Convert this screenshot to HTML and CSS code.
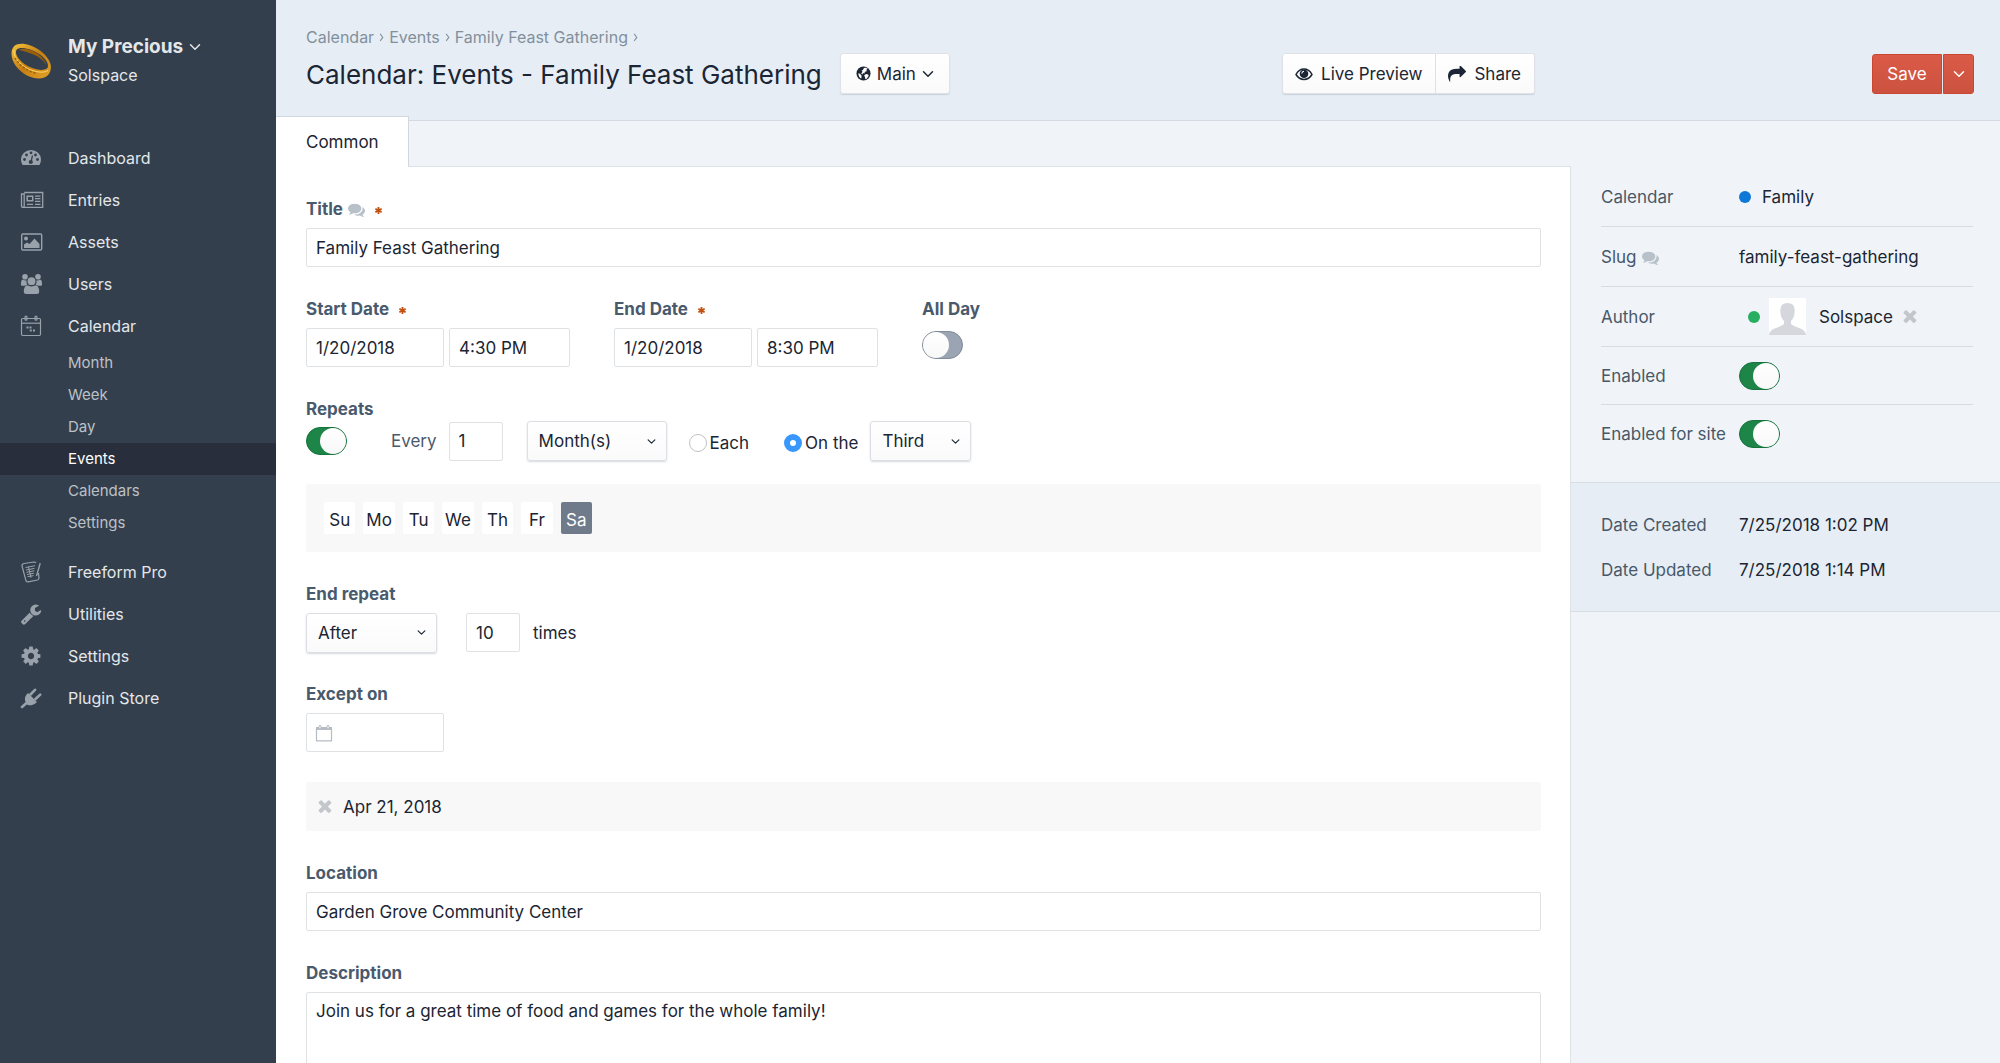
FILE: index.html
```html
<!DOCTYPE html>
<html lang="en">
<head>
<meta charset="utf-8">
<title>Calendar: Events - Family Feast Gathering</title>
<meta name="viewport" content="width=device-width, initial-scale=1">
<link rel="stylesheet" href="styles.css">
</head>
<body>
<svg class="sprite" aria-hidden="true">
  <symbol id="i-chevron" viewBox="0 0 12 12"><path d="M1.500 3.800 6 8.200l4.500-4.400" fill="none" stroke="currentColor" stroke-width="1.500" stroke-linecap="round" stroke-linejoin="round"/></symbol>
  <symbol id="i-sep" viewBox="0 0 8 12"><path d="M2.500 2.500 5.500 6.500 2.500 10.500" fill="none" stroke="currentColor" stroke-width="1.200"/></symbol>
  <symbol id="i-star" viewBox="0 0 10 10"><path d="M5 1v8M1.500 3l7 4M8.500 3l-7 4" stroke="currentColor" stroke-width="2"/></symbol>
  <symbol id="i-times" viewBox="250 350 1300 1300"><path fill="currentColor" d="M1490 1322q0 40-28 68l-136 136q-28 28-68 28t-68-28l-294-294-294 294q-28 28-68 28t-68-28l-136-136q-28-28-28-68t28-68l294-294-294-294q-28-28-28-68t28-68l136-136q28-28 68-28t68 28l294 294 294-294q28-28 68-28t68 28l136 136q28 28 28 68t-28 68l-294 294 294 294q28 28 28 68z"/></symbol>
  <symbol id="i-comments" viewBox="0 192 1792 1472"><path fill="currentColor" d="M1408 768q0 139-94 257t-256.500 186.500-353.500 68.500q-86 0-176-16-124 88-278 128-36 9-86 16h-3q-11 0-20.500-8t-11.500-21q-1-3-1-6.500t.5-6.500 2-6l2.500-5 3.500-5.500 4-5 4.500-5 4-4.500q5-6 23-25t26-29.500 22.500-29 25-38.500 20.500-44q-124-72-195-177t-71-224q0-139 94-257t256.500-186.500 353.500-68.500 353.500 68.500 256.500 186.500 94 257zm384 256q0 120-71 224.500t-195 176.500q10 24 20.500 44t25 38.500 22.500 29 26 29.500 23 25q1 1 4 4.500t4.500 5 4 5 3.500 5.500l2.500 5 2 6 .5 6.500-1 6.500q-3 14-13 22t-22 7q-50-7-86-16-154-40-278-128-90 16-176 16-271 0-472-132 58 4 88 4 161 0 309-45t264-129q125-92 192-212t67-254q0-77-23-152 129 71 204 178t75 230z"/></symbol>
</svg>

<div class="app">
  <aside class="sidebar">
    <div class="brand">
      <svg class="ring" viewBox="0 0 40 36" aria-hidden="true">
        <defs><linearGradient id="gold" x1="0" y1="0" x2="1" y2="1"><stop offset="0" stop-color="#f6c33c"/><stop offset=".5" stop-color="#c47d12"/><stop offset="1" stop-color="#e2a32a"/></linearGradient></defs>
        <path fill="url(#gold)" fill-rule="evenodd" d="M2.500 4C5 .5 12-.3 19.500 2.500 29 6 37 13 39.500 21c1 4 0 8-2 10.500-4 5-13 5-21.500 1C7 28 .5 19 .5 10.500.5 8 1 6 2.500 4zM5.500 7c-2 3.500 1.500 9.500 8 14 8 5.500 18 7.500 22.500 4.500 3-3.500-1-10-8-14.500C20 5.500 8.500 3 5.500 7z"/>
        <path fill="#9a5f0a" d="M8 7c3-2 10-1.500 16 2 5 2.800 10 8 11.500 13-3-5-8-8.500-13-10.500C17 9 12 8 8 7z"/>
        <path fill="none" stroke="#ffdb6b" stroke-width="1" d="M3 7c-1 9 9 17 17 20 8 3 14 2.500 17 .5"/>
        <path fill="none" stroke="#9a5f0a" stroke-width="1.500" stroke-dasharray="2 2" d="M4 15c5 8 13 13.500 22 15.500"/>
      </svg>
      <div class="brand-text">
        <button class="site-name" type="button">My Precious <svg class="chev"><use href="#i-chevron"/></svg></button>
        <a class="site-owner" href="#">Solspace</a>
      </div>
    </div>
    <nav class="nav" aria-label="Main">
      <a class="nav-item" href="#"><svg viewBox="0 0 22 22"><path fill="currentColor" d="M1 12.500a10 9.500 0 0 1 20 0q0 3.200-1.500 5.500h-17Q1 15.700 1 12.500z"/><g fill="#333f4d"><circle cx="4.500" cy="12.500" r="1.400"/><circle cx="6.500" cy="8" r="1.400"/><circle cx="11" cy="5.800" r="1.400"/><circle cx="15.500" cy="8" r="1.400"/><circle cx="17.500" cy="12.500" r="1.400"/><circle cx="10.800" cy="15" r="2.100"/></g><path stroke="#333f4d" stroke-width="1.200" d="m11 15 1.500-6.500"/></svg>Dashboard</a>
      <a class="nav-item" href="#"><svg class="wide" viewBox="0 0 24 22"><g fill="none" stroke="currentColor" stroke-width="1.300"><path d="M4.200 3.500h18.500v14.800H3q-1.500 0-1.500-1.500V5h2.700v12q0 1.200-1.200 1.300"/><path d="M7.200 7.200h5.500v4.600H7.200z" stroke-width="1.500"/><path d="M15 7.200h5.500M15 9.700h5.500M15 12.300h5.500M7 15.300h6M15 15.300h5.500"/></g></svg>Entries</a>
      <a class="nav-item" href="#"><svg class="wide" viewBox="0 0 24 22"><rect x="1.700" y="3" width="20" height="16" rx="1.200" fill="none" stroke="currentColor" stroke-width="1.400"/><circle cx="6" cy="7.500" r="2" fill="currentColor"/><path fill="currentColor" d="M4 17v-3.500l3-2 2.500 1.500 5-5.500 5 5.500v4z"/></svg>Assets</a>
      <a class="nav-item" href="#"><svg class="wide" viewBox="0 0 24 22"><g fill="currentColor"><circle cx="5" cy="3.800" r="2.800"/><circle cx="18" cy="3.800" r="2.800"/><path d="M1 12V9.500Q1 7 3 6.500q2 1.300 3.500.8-.5 3.200 1 4.500-1.500.2-2.500 1H2Q1 12.800 1 12zM22 12V9.500Q22 7 20 6.500q-2 1.300-3.500.8.500 3.200-1 4.500 1.500.2 2.500 1h3q1 0 1-.8z"/><circle cx="11.500" cy="8.200" r="3.900"/><path d="M7 12.300q4.500 2.200 9 0 3.200 1.200 3.200 6.200 0 2.500-2.500 2.500H6.300q-2.500 0-2.500-2.500 0-5 3.200-6.200z"/></g></svg>Users</a>
      <a class="nav-item" href="#"><svg viewBox="0 0 22 22"><g fill="none" stroke="currentColor" stroke-width="1.200"><rect x="1.500" y="3.500" width="19" height="17" rx="1.200"/><path d="M1.500 8.200h19"/><rect x="5" y="1.200" width="2" height="4" rx="1"/><rect x="15" y="1.200" width="2" height="4" rx="1"/></g><path fill="currentColor" d="M6.500 11.500h2v2h-2zM9.500 11.500h2v2h-2zM9.800 14.600h2v2h-2zM13 14.600h2v2h-2z"/></svg>Calendar</a>
      <div class="subnav">
        <a href="#">Month</a>
        <a href="#">Week</a>
        <a href="#">Day</a>
        <a href="#" class="active" aria-current="page">Events</a>
        <a href="#">Calendars</a>
        <a href="#">Settings</a>
      </div>
      <a class="nav-item" href="#"><svg viewBox="0 0 22 22"><g fill="none" stroke="currentColor"><path stroke-width="1.200" d="M4 2.500 14 1q1.500 0 1.800 1M18.500 12l.5 5q0 1.500-1.500 2l-9.500 1.800q-1.500.2-2-1L2 5q-.3-2 2-2.500"/><path stroke-width="1.400" d="M20.200 2.200 16.500 15"/><path d="m5.500 6.500 9.500-1.800M6 9l8.500-1.600M6.500 11.300l7.800-1.500M7 13.500l7-1.300M7.500 15.700l6-1.100M8.500 5.800l2.500 11"/></g></svg>Freeform Pro</a>
      <a class="nav-item" href="#"><svg viewBox="0 0 1792 1792"><path fill="currentColor" d="M448 1472q0-26-19-45t-45-19-45 19-19 45 19 45 45 19 45-19 19-45zm644-420l-682 682q-37 37-90 37-52 0-91-37l-106-108q-38-36-38-90 0-53 38-91l681-681q39 98 114.500 173.500t173.500 114.500zm634-435q0 39-23 106-47 134-164.500 217.500t-258.500 83.500q-185 0-316.500-131.500t-131.500-316.500 131.500-316.500 316.500-131.500q58 0 121.500 16.500t107.500 46.500q16 11 16 28t-16 28l-293 169v224l193 107q5-3 79-48.500t135.500-81 70.500-35.500q15 0 23.500 10t8.500 25z"/></svg>Utilities</a>
      <a class="nav-item" href="#"><svg viewBox="0 0 1792 1792"><path fill="currentColor" d="M1152 896q0-106-75-181t-181-75-181 75-75 181 75 181 181 75 181-75 75-181zm512-109v222q0 12-8 23t-20 13l-185 28q-19 54-39 91 35 50 107 138 10 12 10 25t-9 23q-27 37-99 108t-94 71q-12 0-26-9l-138-108q-44 23-91 38-16 136-29 186-7 28-36 28h-222q-14 0-24.500-8.500t-11.500-21.500l-28-184q-49-16-90-37l-141 107q-10 9-25 9-14 0-25-11-126-114-165-168-7-10-7-23 0-12 8-23 15-21 51-66.500t54-70.500q-27-50-41-99l-183-27q-13-2-21-12.500t-8-23.500v-222q0-12 8-23t19-13l186-28q14-46 39-92-40-57-107-138-10-12-10-24 0-10 9-23 26-36 98.500-107.500t94.500-71.500q13 0 26 10l138 107q44-23 91-38 16-136 29-186 7-28 36-28h222q14 0 24.500 8.500t11.500 21.500l28 184q49 16 90 37l142-107q9-9 24-9 13 0 25 10 129 119 165 170 7 8 7 22 0 12-8 23-15 21-51 66.500t-54 70.500q26 50 41 98l183 28q13 2 21 12.500t8 23.500z"/></svg>Settings</a>
      <a class="nav-item" href="#"><svg viewBox="0 0 22 22"><path fill="currentColor" d="m8 6 9 9q-2.500 2.800-5.500 3.200-2.500.4-4.500-.8L6 16.200Q4.300 13.500 5 10.500 5.600 8 8 6z"/><path stroke="currentColor" stroke-width="2.600" stroke-linecap="round" d="m2 20 4.500-4M10.500 7.500 15 2.800M15.500 12l4.700-4.400"/></svg>Plugin Store</a>
    </nav>
  </aside>

  <main class="main">
    <header class="header">
      <div class="header-main">
        <nav class="crumbs" aria-label="Breadcrumb">
          <a href="#">Calendar</a><svg><use href="#i-sep"/></svg>
          <a href="#">Events</a><svg><use href="#i-sep"/></svg>
          <a href="#">Family Feast Gathering</a><svg><use href="#i-sep"/></svg>
        </nav>
        <div class="title-row">
          <h1>Calendar: Events - Family Feast Gathering</h1>
          <button class="btn" type="button"><svg class="globe" viewBox="0 0 16 16"><circle cx="8" cy="8" r="7.500" fill="currentColor"/><path fill="#fdfdfd" d="M8.500 2q2.500-.5 4 1l-1.500 1 .5 1.500-2 .5-.5 2-1.500-.5-.5 1.500L5.500 8 7 6 6 5l1.500-1zM10.500 8.500l2.500.5.500 1.500-2 3-1.500.5-.5-2.500-1-1zM3 7.500 5.500 9.500 6 11l-.5 2.500Q3 12 2.500 9z"/></svg>Main<svg class="chev"><use href="#i-chevron"/></svg></button>
          <div class="btn-group">
            <button class="btn" type="button"><svg class="eye" viewBox="0 0 18 14"><path fill="none" stroke="currentColor" stroke-width="1.500" d="M1 7.500Q4 2 9 2t8 5.500Q14 12.500 9 12.500T1 7.500z"/><circle cx="9" cy="6.800" r="4.300" fill="currentColor"/><path d="M6.800 6.500Q7 4.500 9 4.300" fill="none" stroke="#fff" stroke-width="1.100"/></svg>Live Preview</button>
            <button class="btn" type="button"><svg class="share" viewBox="0 128 1792 1536"><path fill="currentColor" d="M1792 640q0 26-19 45l-512 512q-19 19-45 19t-45-19-19-45v-256h-224q-98 0-175.500 6t-154 21.500-133 42.500-105.500 69.500-80 101-48.500 138.500-17.500 181q0 55 5 123 0 6 2.500 23.500t2.500 26.500q0 15-8.500 25t-23.500 10q-16 0-28-17-7-9-13-22t-13.500-30-10.500-24q-127-285-127-451 0-199 53-333 162-403 875-403h224v-256q0-26 19-45t45-19 45 19l512 512q19 19 19 45z"/></svg>Share</button>
          </div>
        </div>
      </div>
      <div class="header-side">
        <div class="save-group">
          <button class="save" type="submit" form="event-form">Save</button>
          <button class="save save-menu" type="button" aria-label="More save options"><svg class="chev"><use href="#i-chevron"/></svg></button>
        </div>
      </div>
    </header>

    <div class="body">
      <div class="content">
        <nav class="tabs"><a class="tab" href="#">Common</a></nav>
        <form class="pane" id="event-form">
          <div class="field">
            <label class="heading" for="title">Title <svg class="tip"><use href="#i-comments"/></svg><svg class="req"><use href="#i-star"/></svg></label>
            <input class="text" id="title" type="text" value="Family Feast Gathering">
          </div>

          <div class="dates">
            <div class="field">
              <label class="heading" for="start-date">Start Date <svg class="req"><use href="#i-star"/></svg></label>
              <div class="pair">
                <input class="text date" id="start-date" type="text" value="1/20/2018">
                <input class="text time" type="text" value="4:30 PM" aria-label="Start time">
              </div>
            </div>
            <div class="field">
              <label class="heading" for="end-date">End Date <svg class="req"><use href="#i-star"/></svg></label>
              <div class="pair">
                <input class="text date" id="end-date" type="text" value="1/20/2018">
                <input class="text time" type="text" value="8:30 PM" aria-label="End time">
              </div>
            </div>
            <div class="field">
              <label class="heading" for="all-day">All Day</label>
              <div class="toggle-row"><input class="toggle" id="all-day" type="checkbox"></div>
            </div>
          </div>

          <div class="field">
            <label class="heading" for="repeats">Repeats</label>
            <div class="repeat-row">
              <input class="toggle" id="repeats" type="checkbox" checked>
              <label class="every" for="interval">Every</label>
              <input class="text num" id="interval" type="text" value="1">
              <span class="select select-freq"><select aria-label="Frequency"><option>Month(s)</option></select><svg class="chev"><use href="#i-chevron"/></svg></span>
              <label class="radio radio-each"><input type="radio" name="by">Each</label>
              <label class="radio"><input type="radio" name="by" checked>On the</label>
              <span class="select select-nth"><select aria-label="Occurrence"><option>Third</option></select><svg class="chev"><use href="#i-chevron"/></svg></span>
            </div>
            <div class="well">
              <div class="days">
                <button type="button">Su</button><button type="button">Mo</button><button type="button">Tu</button><button type="button">We</button><button type="button">Th</button><button type="button">Fr</button><button type="button" class="on" aria-pressed="true">Sa</button>
              </div>
            </div>
          </div>

          <div class="field">
            <label class="heading" for="end-repeat">End repeat</label>
            <div class="end-row">
              <span class="select select-end"><select id="end-repeat"><option>After</option></select><svg class="chev"><use href="#i-chevron"/></svg></span>
              <input class="text num" id="times" type="text" value="10">
              <label for="times">times</label>
            </div>
          </div>

          <div class="field">
            <label class="heading" for="except">Except on</label>
            <div class="except">
              <input class="text date" id="except" type="text">
              <svg class="cal" viewBox="0 0 18 18" aria-hidden="true"><path fill="none" stroke="currentColor" stroke-width="1.200" d="M1.500 4.500h15v12.300h-15z"/><path fill="currentColor" d="M1 3h16v3H1z"/><path fill="#fff" stroke="currentColor" d="M4 4.500V2q1-1.500 2 0v2.500q-1 1-2 0zM12 4.500V2q1-1.500 2 0v2.500q-1 1-2 0z"/></svg>
            </div>
            <ul class="exceptions">
              <li><button class="remove" type="button" aria-label="Remove Apr 21, 2018"><svg><use href="#i-times"/></svg></button>Apr 21, 2018</li>
            </ul>
          </div>

          <div class="field">
            <label class="heading" for="location">Location</label>
            <input class="text" id="location" type="text" value="Garden Grove Community Center">
          </div>

          <div class="field">
            <label class="heading" for="description">Description</label>
            <textarea class="text" id="description">Join us for a great time of food and games for the whole family!</textarea>
          </div>
        </form>
      </div>

      <aside class="details">
        <div class="settings">
          <div class="row"><span class="name">Calendar</span><span class="value"><i class="dot blue"></i>Family</span></div>
          <div class="row"><label class="name" for="slug">Slug <svg class="tip"><use href="#i-comments"/></svg></label><input class="slug" id="slug" type="text" value="family-feast-gathering"></div>
          <div class="row"><span class="name">Author</span><span class="value author"><i class="dot green"></i><svg class="avatar" viewBox="0 0 37 37"><path fill="#fff" d="M0 0h37v37H0z"/><path fill="#d5d7dd" d="M18.500 5q7.500 0 7.200 8-.2 7-3.700 10v3q3 2.500 8 4 6 1.500 7 7H0q1-5.500 7-7 5-1.500 8-4v-3q-3.500-3-3.700-10-.3-8 7.200-8z"/></svg><span>Solspace</span><button class="remove" type="button" aria-label="Remove Solspace"><svg><use href="#i-times"/></svg></button></span></div>
          <div class="row row-toggle"><label class="name" for="enabled">Enabled</label><input class="toggle" id="enabled" type="checkbox" checked></div>
          <div class="row row-toggle"><label class="name" for="enabled-site">Enabled for site</label><input class="toggle" id="enabled-site" type="checkbox" checked></div>
        </div>
        <dl class="meta">
          <div class="meta-row"><dt>Date Created</dt><dd>7/25/2018 1:02 PM</dd></div>
          <div class="meta-row"><dt>Date Updated</dt><dd>7/25/2018 1:14 PM</dd></div>
        </dl>
      </aside>
    </div>
  </main>
</div>
</body>
</html>
```
FILE: styles.css
```css
* { box-sizing: border-box; }

body {
  margin: 0;
  font: 17px/22px Inter, "Liberation Sans", sans-serif;
  color: #1b2533;
  background: #f0f4f8;
}

button, input, select, textarea { font: inherit; color: inherit; margin: 0; }
button { padding: 0; border: 0; background: none; cursor: pointer; }
a { color: inherit; text-decoration: none; }
svg { flex: none; display: block; }
.sprite { display: none; }
.chev { width: 12px; height: 12px; }

.app {
  display: grid;
  grid-template-columns: 276px minmax(0, 1fr);
  height: 100vh;
  overflow: hidden;
}

/* Sidebar */
.sidebar { background: #333f4d; color: #e4e7ea; font-size: 16px; }
.brand { display: flex; gap: 17px; padding: 34px 11px 51px; }
.ring { width: 40px; height: 36px; margin-top: 9px; }
.brand-text { display: flex; flex-direction: column; gap: 4px; }
.site-name { display: flex; align-items: center; gap: 6px; height: 26px; font-size: 19px; font-weight: 700; }
.site-owner { height: 22px; }
.nav-item { display: flex; align-items: center; height: 42px; padding-left: 20px; gap: 26px; }
.nav-item svg { width: 22px; height: 22px; color: #99a1aa; }
.nav-item svg.wide { width: 24px; margin-right: -2px; }
.subnav { margin-bottom: 12px; font-size: 15px; color: #bcc1c7; }
.subnav a { display: flex; align-items: center; height: 32px; padding-left: 68px; }
.subnav .active { background: #282e3b; color: #fff; }

/* Header */
.main { display: flex; flex-direction: column; min-width: 0; min-height: 0; }
.header, .body { display: grid; grid-template-columns: minmax(0, 1fr) 429px; }
.header { background: #e6edf5; border-bottom: 1px solid #d3dae3; }
.header-main { padding: 26px 36px 26px 30px; }
.crumbs { display: flex; align-items: center; gap: 4px; height: 22px; font-size: 16px; color: #82909c; }
.crumbs svg { width: 7px; height: 12px; }
.title-row { display: flex; align-items: center; margin-top: 5px; }
h1 { margin: 0 18px 0 0; padding-top: 2px; font-size: 26px; line-height: 32px; font-weight: 400; white-space: nowrap; }
.btn {
  display: flex;
  align-items: center;
  height: 41px;
  padding: 0 15px;
  gap: 6px;
  border: 1px solid #dfe3e8;
  border-radius: 3px;
  background: linear-gradient(#fff, #fafafa);
  box-shadow: 0 1px 1px #c9d0d9;
}
.globe { width: 15px; height: 15px; }
.eye { width: 18px; height: 14px; }
.share { width: 18px; height: 16px; }
.btn-group { display: flex; margin-left: auto; }
.btn-group .btn { padding: 0 13px 0 12px; gap: 8px; }
.btn-group .btn:first-child { border-radius: 3px 0 0 3px; }
.btn-group .btn:last-child { border-left: 0; border-radius: 0 3px 3px 0; }
.header-side { display: flex; justify-content: flex-end; align-items: flex-end; padding: 0 26px 26px; }
.save-group { display: flex; gap: 1px; }
.save {
  height: 40px;
  width: 70px;
  border: 1px solid #cb4631;
  border-radius: 3px 0 0 3px;
  background: linear-gradient(#da5a47, #cc5240);
  color: #fff;
}
.save-menu { width: 31px; border-radius: 0 3px 3px 0; display: flex; align-items: center; justify-content: center; }

/* Tabs and editing pane */
.body { flex: 1; min-height: 0; }
.content { display: flex; flex-direction: column; min-height: 0; }
.tabs { display: flex; margin: -5px 0 -1px; position: relative; }
.tab {
  display: flex;
  align-items: center;
  height: 51px;
  padding: 0 29px 0 30px;
  border: 1px solid #cfd7e0;
  border-width: 1px 1px 0 0;
  background: #fff;
}
.pane {
  flex: 1;
  min-height: 0;
  overflow: hidden;
  padding: 31px 29px 0 30px;
  background: #fff;
  border: 1px solid #dde2e7;
  border-width: 1px 1px 0 0;
}
.field { margin-bottom: 31px; }
.heading { display: flex; align-items: center; height: 22px; margin-bottom: 8px; font-weight: 700; color: #4a5a6d; }
.tip { width: 17px; height: 14px; margin: 2px 0 0 5px; color: #b8c0c9; }
.req { width: 9px; height: 9px; margin: 2px 0 0 9px; color: #c2500f; }
.text {
  display: block;
  width: 100%;
  height: 39px;
  padding: 0 9px;
  border: 1px solid #dfe2e5;
  border-radius: 2px;
  background: #fff;
}
.text.date { width: 138px; }
.text.time { width: 121px; }
.text.num { width: 54px; }
textarea.text { height: 160px; padding-top: 7px; resize: none; }
.dates { display: flex; gap: 44px; }
.pair { display: flex; gap: 5px; }
.toggle-row { display: flex; align-items: center; height: 34px; }

.toggle {
  appearance: none;
  display: flex;
  width: 41px;
  height: 28px;
  border: 1px solid #828b99;
  border-radius: 14px;
  background: #9ba4b2;
}
.toggle::before { content: ""; width: 26px; height: 26px; border-radius: 13px; background: linear-gradient(#fff, #f8f8f8); }
.toggle:checked { justify-content: flex-end; border-color: #16733c; background: #1d8548; }

.repeat-row { display: flex; align-items: center; margin-top: -7px; height: 40px; }
.every { margin: 0 12px 0 44px; color: #4a5a6d; }
.select { display: grid; align-items: center; }
.select select {
  grid-area: 1 / 1;
  appearance: none;
  height: 40px;
  padding: 0 11px;
  border: 1px solid #dcdfe3;
  border-radius: 3px;
  background: linear-gradient(#fff, #fafafa);
  box-shadow: 0 1px 2px #d5d8dc;
}
.select .chev { grid-area: 1 / 1; justify-self: end; width: 9px; height: 9px; margin-right: 11px; pointer-events: none; }
.select-freq { width: 140px; margin: 0 22px 0 24px; }
.select-nth { width: 101px; margin-left: 12px; }
.select-end { width: 131px; margin-right: 29px; }
.radio { display: flex; align-items: center; gap: 3px; padding-top: 3px; }
.radio-each { margin-right: 35px; }
.radio input { appearance: none; width: 18px; height: 18px; border: 1px solid #bfc2c6; border-radius: 9px; background: #fff; }
.radio input:checked { border: 6px solid #3897fc; }

.well { margin-top: 23px; padding: 18px; background: #f8f8f8; border-radius: 2px; }
.days { display: grid; grid-template-columns: repeat(7, 1fr); gap: 8px; width: 268px; }
.days button { height: 32px; padding-top: 3px; border-radius: 2px; background: #fff; text-align: center; }
.days .on { background: #6f7b8a; color: #fff; }
.end-row { display: flex; align-items: center; height: 39px; }
.end-row label { margin-left: 13px; }
.except { display: grid; align-items: center; }
.except > * { grid-area: 1 / 1; }
.cal { width: 18px; height: 18px; margin-left: 9px; color: #b5bcc3; }
.exceptions { margin: 30px 0 0; padding: 0; list-style: none; }
.exceptions li { display: flex; align-items: center; gap: 11px; height: 49px; padding-left: 12px; background: #f8f8f8; border-radius: 2px; }
.remove { color: #c3c7cc; }
.remove svg { width: 14px; height: 14px; }

/* Details column */
.settings { padding: 46px 27px 19px 30px; }
.row { display: grid; grid-template-columns: 138px 1fr; align-items: center; height: 60px; border-bottom: 1px solid #d7dce1; }
.row-toggle { height: 58px; }
.row:last-child { border-bottom: 0; }
.name { display: flex; align-items: center; color: #485868; white-space: nowrap; }
.value { display: flex; align-items: center; }
.slug { width: 100%; padding: 0; border: 0; background: none; }
.dot { width: 12px; height: 12px; border-radius: 6px; }
.blue { background: #0d78d8; margin-right: 11px; }
.green { background: #27ae60; margin: 0 9px 0 9px; }
.avatar { width: 37px; height: 37px; margin-right: 13px; }
.author .remove { margin-left: 10px; }
.meta { margin: 0; padding: 19px 30px; background: #e6edf5; border: 1px solid #d7dde4; border-width: 1px 0; }
.meta-row { display: grid; grid-template-columns: 138px 1fr; align-items: center; height: 45px; }
.meta dt { color: #485868; }
.meta dd { margin: 0; }
```
